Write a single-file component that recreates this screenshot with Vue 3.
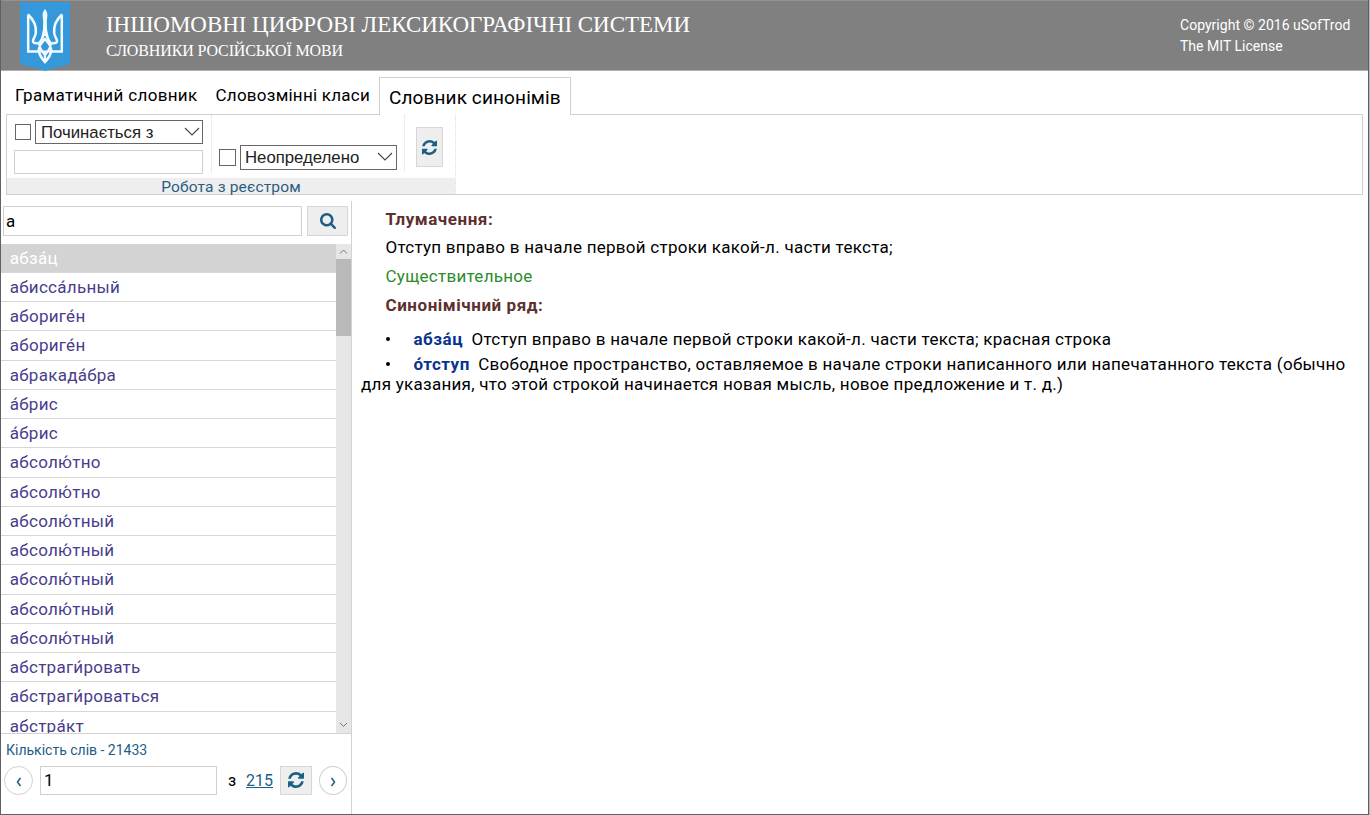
<script setup>
import { ref } from 'vue'

const tabs = ['Граматичний словник', 'Словозмінні класи', 'Словник синонімів']
const activeTab = ref(2)
const selected = ref(0)
const query = ref('а')
const page = ref('1')
const prefix = ref('')

const words = [
  'абза́ц', 'абисса́льный', 'абориге́н', 'абориге́н', 'абракада́бра', 'а́брис', 'а́брис',
  'абсолю́тно', 'абсолю́тно', 'абсолю́тный', 'абсолю́тный', 'абсолю́тный', 'абсолю́тный',
  'абсолю́тный', 'абстраги́ровать', 'абстраги́роваться', 'абстра́кт'
]

const refreshPath =
  'M1511 928q0 5-1 7-64 268-268 434.5T764 1536q-146 0-282.5-55T238 1324l-129 129q-19 19-45 19t-45-19-19-45V960q0-26 19-45t45-19h448q26 0 45 19t19 45-19 45l-137 137q71 66 161 102t187 36q134 0 250-65t186-179q11-17 53-117 8-23 30-23h192q13 0 22.5 9.5t9.5 22.5zm25-800v448q0 26-19 45t-45 19h-448q-26 0-45-19t-19-45 19-45l138-138Q969 256 768 256q-134 0-250 65T332 500q-11 17-53 117-8 23-30 23H50q-13 0-22.5-9.5T18 608v-7q65-268 270-434.5T768 0q146 0 284 55.5T1297 212l130-129q19-19 45-19t45 19 19 45z'
</script>

<template>
  <div class="window">
    <header class="header">
      <svg class="emblem" width="50" height="69" viewBox="0 0 50 69">
        <path d="M0 0H50V61C46 65 33 65 25 69C17 65 4 65 0 61Z" fill="#3498db" />
        <g fill="none" stroke="#f2fbff" stroke-width="2.5" stroke-linejoin="miter">
          <path d="M8.200 12.500V49.500H19C19.500 54 22 56.500 25 60C28 56.500 30.500 54 31 49.500H41.800V12.500" />
          <path d="M8 12.500C14 18 16.500 24 15.800 31C15.500 35 12.500 37 13 39.500C13.500 41.500 16 41.500 19 41C23 39 24 30 25 22C26 30 27 39 31 41C34 41.500 36.500 41.500 37 39.500C37.500 37 34.500 35 34.200 31C33.500 24 36 18 42 12.500" />
          <path d="M18.500 50C18 44 21.500 41.500 25 37C28.500 41.500 32 44 31.500 50M19 41C19.500 47 23 50 25 53C27 50 30.500 47 31 41M18 49.500H32M25 49V60" stroke-width="2.200" />
        </g>
        <path d="M25 7C27.800 10 27.800 14 26.800 18L27 34H23L23.200 18C22.200 14 22.200 10 25 7Z" fill="#f2fbff" />
      </svg>
      <div class="titles">
        <h1>ІНШОМОВНІ ЦИФРОВІ ЛЕКСИКОГРАФІЧНІ СИСТЕМИ</h1>
        <h2>СЛОВНИКИ РОСІЙСЬКОЇ МОВИ</h2>
      </div>
      <div class="copyright">Copyright © 2016 uSofTrod<br />The MIT License</div>
    </header>

    <nav class="tabs">
      <span
        v-for="(tab, i) in tabs"
        :key="tab"
        :class="['tab', { active: i === activeTab }]"
        @click="activeTab = i"
      >{{ tab }}</span>
    </nav>

    <section class="ribbon">
      <div class="ribbon-group">
        <div class="ribbon-tools">
          <div class="prefix-filter">
            <div class="filter-row">
              <span class="check"></span>
              <span class="select wide"><span>Починається з</span>
                <svg width="16" height="10" viewBox="0 0 16 10"><path d="M1 1L8 8L15 1" /></svg>
              </span>
            </div>
            <input v-model="prefix" class="prefix-input" type="text" />
          </div>
          <div class="class-filter">
            <span class="check big"></span>
            <span class="select"><span>Неопределено</span>
              <svg width="16" height="10" viewBox="0 0 16 10"><path d="M1 1L8 8L15 1" /></svg>
            </span>
          </div>
          <button class="btn reload">
            <svg width="15" height="15" viewBox="0 0 1536 1536"><path :d="refreshPath" /></svg>
          </button>
        </div>
        <div class="ribbon-caption"><span>Робота з реєстром</span></div>
      </div>
    </section>

    <main class="body">
      <aside class="sidebar">
        <div class="search">
          <input v-model="query" class="search-input" type="text" />
          <button class="btn find">
            <svg width="16" height="16" viewBox="0 0 1664 1664"><path d="M1152 704q0-185-131.500-316.500T704 256 387.500 387.500 256 704t131.500 316.500T704 1152t316.500-131.500T1152 704zm512 832q0 52-38 90t-90 38q-54 0-90-38l-343-342q-179 124-399 124-143 0-273.500-55.500t-225-150-150-225T0 704t55.500-273.500 150-225 225-150T704 0t273.500 55.500 225 150 150 225T1408 704q0 220-124 399l343 343q37 37 37 90z" /></svg>
          </button>
        </div>
        <div class="list-wrap">
          <ul class="words">
            <li v-for="(w, i) in words" :key="i" :class="{ selected: i === selected }" @click="selected = i">{{ w }}</li>
          </ul>
          <div class="scrollbar">
            <svg width="15" height="15" viewBox="0 0 15 15"><path d="M4 9.500L7.500 6L11 9.500" /></svg>
            <div class="thumb"></div>
            <svg width="15" height="15" viewBox="0 0 15 15"><path d="M4 5L7.500 8.500L11 5" /></svg>
          </div>
        </div>
        <div class="count"><span>Кількість слів - 21433</span></div>
        <div class="pager">
          <button class="round"><svg width="6" height="10" viewBox="0 0 6 10"><path d="M4.500 1L1.500 5L4.500 9" /></svg></button>
          <input v-model="page" class="page-input" type="text" />
          <span class="of">з</span>
          <a class="total">215</a>
          <button class="btn go">
            <svg width="16" height="16" viewBox="0 0 1536 1536"><path :d="refreshPath" /></svg>
          </button>
          <button class="round"><svg width="6" height="10" viewBox="0 0 6 10"><path d="M1.500 1L4.500 5L1.500 9" /></svg></button>
        </div>
      </aside>

      <article class="entry">
        <p class="label first"><span>Тлумачення:</span></p>
        <p><span>Отступ вправо в начале первой строки какой-л. части текста;</span></p>
        <p class="pos"><span>Существительное</span></p>
        <p class="label"><span>Синонімічний ряд:</span></p>
        <div class="synonyms">
          <div class="syn"><i class="bullet"></i><b>абза́ц</b>Отступ вправо в начале первой строки какой-л. части текста; красная строка</div>
          <div class="syn"><i class="bullet"></i><b>о́тступ</b>Свободное пространство, оставляемое в начале строки написанного или напечатанного текста (обычно<br />для указания, что этой строкой начинается новая мысль, новое предложение и т. д.)</div>
        </div>
      </article>
    </main>
  </div>
</template>

<style>
body {
  margin: 0;
  background: #b5b5b5;
  overflow: hidden;
}
</style>

<style scoped>
* {
  box-sizing: border-box;
}
.window {
  width: 1369px;
  height: 815px;
  display: flex;
  flex-direction: column;
  border: 1px solid #606166;
  border-top: 0;
  background: #fff;
  font: 17px/20px Roboto, "Noto Sans", sans-serif;
  letter-spacing: 0.27px;
  color: #000;
}
.header {
  flex: none;
  height: 71px;
  display: flex;
  align-items: flex-start;
  background: #808080;
  border-top: 1px solid #929292;
  border-bottom: 1px solid #b0b0b0;
  color: #fff;
}
.emblem {
  flex: none;
  margin: 1px 0 -1px 19px;
}
.titles {
  margin: 11px 0 0 36px;
  flex: 1;
  font-family: "Liberation Serif", serif;
}
h1,
h2 {
  margin: 0;
  font-weight: 400;
  white-space: nowrap;
}
h1 {
  font-size: 23px;
  line-height: 26px;
  letter-spacing: -0.04px;
}
h2 {
  margin-top: 1px;
  font-size: 16px;
  line-height: 24px;
  letter-spacing: -0.13px;
}
.copyright {
  width: 188px;
  padding-top: 14px;
  font-size: 14px;
  line-height: 21px;
  letter-spacing: 0.02px;
}
.tabs {
  flex: none;
  height: 44px;
  display: flex;
  align-items: flex-end;
  padding-left: 5px;
  position: relative;
  z-index: 1;
  margin-bottom: -1px;
}
.tab {
  height: 38px;
  padding: 8px 9px 0;
  line-height: 20px;
  letter-spacing: 0.34px;
  white-space: nowrap;
}
.tab:nth-child(2) {
  letter-spacing: 0.24px;
}
.tab.active {
  border: 1px solid #d0d0d0;
  border-bottom: 0;
  background: #fff;
  font-size: 19px;
  letter-spacing: 0.12px;
  padding-top: 10px;
}
.ribbon {
  flex: none;
  height: 81px;
  margin: 0 5px;
  border: 1px solid #d0d0d0;
}
.ribbon-group {
  width: 449px;
  height: 79px;
  display: flex;
  flex-direction: column;
  border-right: 1px dotted #ddd;
}
.ribbon-tools {
  flex: 1;
  display: flex;
}
.prefix-filter {
  width: 205px;
  height: 58px;
  padding: 5px 0 0 7px;
  border-right: 1px dotted #ddd;
}
.filter-row {
  display: flex;
  align-items: center;
  gap: 4px;
  height: 24px;
}
.check {
  flex: none;
  width: 16px;
  height: 16px;
  margin-left: 1px;
  border: 1px solid #666;
}
.check.big {
  width: 17px;
  height: 17px;
  margin-left: 0;
}
.select {
  display: flex;
  align-items: center;
  justify-content: space-between;
  width: 157px;
  height: 25px;
  padding: 0 3px 0 4px;
  border: 1px solid #666;
  font: 16.750px/22px "Liberation Sans", sans-serif;
  letter-spacing: 0;
  color: #222;
}
.select span {
  padding-top: 2px;
}
.select.wide {
  width: 168px;
  height: 24px;
  padding: 0 2px 0 5px;
}
.select svg {
  fill: none;
  stroke: #444;
  stroke-width: 1.100;
}
.prefix-input {
  display: block;
  width: 189px;
  height: 24px;
  margin-top: 6px;
  border: 1px solid #d0d0d0;
}
.class-filter {
  display: flex;
  align-items: center;
  gap: 4px;
  width: 193px;
  height: 56px;
  padding: 28px 0 0 7px;
  border-right: 1px dotted #ddd;
}
.btn {
  display: flex;
  align-items: center;
  justify-content: center;
  padding: 0;
  border: 1px solid #d6d6d6;
  background: #eee;
}
.btn svg {
  fill: #1b5e86;
}
.reload {
  width: 27px;
  height: 40px;
  margin: 12px 0 0 11px;
}
.ribbon-caption {
  height: 16px;
  background: #eee;
  color: #2a5d83;
  font-size: 15.500px;
  letter-spacing: 0.16px;
  line-height: 18px;
  text-align: center;
}
.body {
  flex: 1;
  min-height: 0;
  display: flex;
  padding-top: 6px;
}
.sidebar {
  flex: none;
  width: 351px;
  display: flex;
  flex-direction: column;
  border-right: 1px solid #d3d3d3;
}
.search {
  display: flex;
  gap: 5px;
  padding: 5px 0 0 2px;
  height: 43px;
}
.search-input,
.page-input {
  height: 30px;
  border: 1px solid #d0d0d0;
  font: 17px Roboto, sans-serif;
  padding: 0 2px;
}
.search-input {
  width: 299px;
}
.find {
  width: 41px;
  height: 30px;
}
.list-wrap {
  display: flex;
  height: 490px;
  border-bottom: 1px solid #d3d3d3;
}
.words {
  flex: 1;
  margin: 0;
  padding: 0;
  list-style: none;
  overflow: hidden;
}
.words li {
  height: 29.250px;
  padding-left: 8.800px;
  border-bottom: 1px solid #d6d6d6;
  line-height: 29px;
  color: #483d8b;
}
.words li.selected {
  height: 28.750px;
  background: #d3d3d3;
  color: #fff;
}
.scrollbar {
  width: 15px;
  display: flex;
  flex-direction: column;
  background: #e6e6e6;
}
.scrollbar svg {
  flex: none;
  fill: none;
  stroke: #777;
}
.scrollbar svg:last-child {
  margin-top: auto;
}
.thumb {
  height: 77px;
  background: #b9b9b9;
}
.count {
  padding: 6px 0 0 5px;
  font-size: 14px;
  letter-spacing: 0;
  color: #1b5e86;
}
.pager {
  display: flex;
  align-items: center;
  height: 30px;
  margin-top: 5px;
  padding-left: 3px;
}
.round {
  display: flex;
  align-items: center;
  justify-content: center;
  width: 29px;
  height: 29px;
  padding: 0;
  border: 1px solid #d0d0d0;
  border-radius: 50%;
  background: #fff;
}
.round:last-child {
  width: 28px;
}
.round svg {
  margin-top: 3px;
  fill: none;
  stroke: #1b5e86;
  stroke-width: 1.500;
}
.page-input {
  width: 177px;
  height: 29px;
  margin-left: 7px;
  padding-left: 3px;
}
.of {
  width: 18px;
  margin: 1px 0 0 11px;
  font-size: 16px;
}
.total {
  width: 34px;
  margin-top: 1px;
  font-size: 16px;
  letter-spacing: 0;
  color: #1b5e86;
  text-decoration: underline;
}
.go {
  width: 32px;
  height: 29px;
  margin-right: 7px;
}
.entry {
  flex: 1;
  padding: 3px 0 0 9px;
}
.entry p {
  margin: 0;
  height: 29px;
  padding-left: 24.500px;
  line-height: 29px;
}
.entry .label {
  color: #5e2f2f;
  font-weight: 700;
  letter-spacing: 0.54px;
}
.entry .first {
  line-height: 31px;
}
.entry .pos {
  color: #2d8b2d;
}
.synonyms {
  padding-top: 9px;
}
.syn {
  margin-bottom: 5px;
  white-space: nowrap;
}
.bullet {
  display: inline-block;
  width: 4px;
  height: 4px;
  margin: 0 23.500px 4px 25px;
  border-radius: 50%;
  background: #000;
}
.syn b {
  margin-right: 8.500px;
  letter-spacing: 0.5px;
  color: #0a3290;
}
</style>
